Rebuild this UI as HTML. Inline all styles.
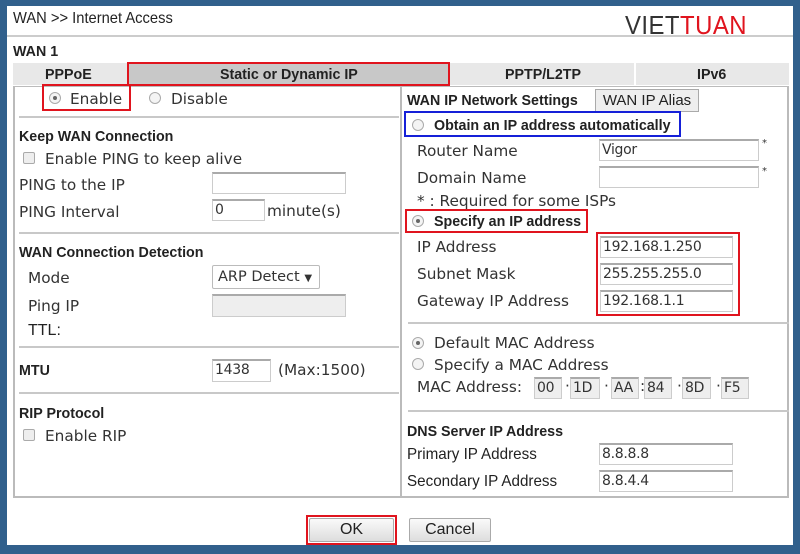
<!DOCTYPE html>
<html><head><meta charset="utf-8"><style>
*{margin:0;padding:0;box-sizing:border-box}
body{width:800px;height:554px;background:#31608c;position:relative;overflow:hidden;font-family:"DejaVu Sans",sans-serif;font-size:15.3px;color:#333}
.a{position:absolute;white-space:nowrap}
.t{margin-top:2px}
.b{font-family:"Liberation Sans",sans-serif;font-weight:bold;font-size:15px;color:#222;transform:scaleX(0.95);transform-origin:left}
.n{font-family:"Liberation Sans",sans-serif;font-size:16px;color:#222}
.inp{position:absolute;background:#fff;border:1px solid #ccc;border-top:2px solid #aaa;font-size:14px;padding-left:2px;line-height:18px;color:#333;letter-spacing:-0.3px}
.g{background:#eee}
.hl{position:absolute;height:2px;background:#c8c8c8}
.r{position:absolute;width:12px;height:12px;border-radius:50%;border:1px solid #aaa;background:#f4f4f4}
.r.on::after{content:"";position:absolute;left:3px;top:3px;width:4px;height:4px;border-radius:50%;background:#666}
.cb{position:absolute;width:12px;height:12px;border:1px solid #aaa;border-radius:2px;background:#eee}
.red{position:absolute;border:2px solid #e0141e}
</style></head><body>
<div class="a" style="left:7px;top:6px;width:786px;height:539px;background:#fff"></div>
<div class="a n" style="left:13px;top:10px;font-size:16px;transform:scaleX(0.92);transform-origin:left">WAN &gt;&gt; Internet Access</div>
<div class="a" style="left:625px;top:10px;font-family:'Liberation Sans',sans-serif;font-size:26px;letter-spacing:0.5px;transform:scaleX(0.92);transform-origin:left"><span style="color:#333">VIET</span><span style="color:#e0141e">TUAN</span></div>
<div class="hl" style="left:7px;top:35px;width:786px;background:#ccc"></div>
<div class="a b" style="left:13px;top:43px">WAN 1</div>
<!-- tabs -->
<div class="a" style="left:13px;top:63px;width:776px;height:22px;background:#e8e8e8"></div>
<div class="a" style="left:128px;top:63px;width:320px;height:22px;background:#c8c8c8"></div>
<div class="a" style="left:448px;top:63px;width:2px;height:22px;background:#fff"></div>
<div class="a" style="left:634px;top:63px;width:2px;height:22px;background:#fff"></div>
<div class="a b" style="left:45px;top:66px">PPPoE</div>
<div class="a b" style="left:220px;top:66px">Static or Dynamic IP</div>
<div class="a b" style="left:505px;top:66px">PPTP/L2TP</div>
<div class="a b" style="left:697px;top:66px">IPv6</div>
<div class="red" style="left:127px;top:62px;width:323px;height:24px"></div>
<!-- main box -->
<div class="a" style="left:13px;top:86px;width:776px;height:412px;border:2px solid #bbb;border-top:1px solid #bbb"></div>
<div class="a" style="left:400px;top:86px;width:2px;height:412px;background:#bbb"></div>
<!-- left -->
<div class="r on" style="left:49px;top:92px"></div><div class="a t" style="left:70px;top:88px">Enable</div>
<div class="red" style="left:42px;top:84px;width:89px;height:27px"></div>
<div class="r" style="left:149px;top:92px"></div><div class="a t" style="left:171px;top:88px">Disable</div>
<div class="hl" style="left:19px;top:116px;width:380px"></div>
<div class="a b" style="left:19px;top:128px">Keep WAN Connection</div>
<div class="cb" style="left:23px;top:152px"></div><div class="a t" style="left:45px;top:148px">Enable PING to keep alive</div>
<div class="a t" style="left:19px;top:174px">PING to the IP</div>
<div class="inp" style="left:212px;top:172px;width:134px;height:22px"></div>
<div class="a t" style="left:19px;top:201px">PING Interval</div>
<div class="inp" style="left:212px;top:199px;width:53px;height:22px">0</div>
<div class="a t" style="left:267px;top:200px">minute(s)</div>
<div class="hl" style="left:19px;top:232px;width:380px"></div>
<div class="a b" style="left:19px;top:244px">WAN Connection Detection</div>
<div class="a t" style="left:28px;top:267px">Mode</div>
<div class="a" style="left:212px;top:265px;width:108px;height:24px;border:1px solid #bbb;border-radius:2px;background:#fff;padding-left:5px;line-height:22px;font-size:14.5px">ARP Detect <span style="font-size:10px">▼</span></div>
<div class="a t" style="left:28px;top:295px">Ping IP</div>
<div class="inp g" style="left:212px;top:294px;width:134px;height:23px"></div>
<div class="a n t" style="left:28px;top:320px">TTL:</div>
<div class="hl" style="left:19px;top:346px;width:380px"></div>
<div class="a b" style="left:19px;top:362px">MTU</div>
<div class="inp" style="left:212px;top:359px;width:59px;height:23px">1438</div>
<div class="a t" style="left:278px;top:359px">(Max:1500)</div>
<div class="hl" style="left:19px;top:392px;width:380px"></div>
<div class="a b" style="left:19px;top:405px">RIP Protocol</div>
<div class="cb" style="left:23px;top:429px"></div><div class="a t" style="left:45px;top:425px">Enable RIP</div>
<!-- right -->
<div class="a b" style="left:407px;top:92px">WAN IP Network Settings</div>
<div class="a n" style="left:595px;top:89px;width:104px;height:23px;border:1px solid #aaa;background:#eee;text-align:center;line-height:21px;font-size:15px">WAN IP Alias</div>
<div class="red" style="left:404px;top:111px;width:277px;height:26px;border-color:#1520d8"></div>
<div class="r" style="left:412px;top:119px"></div>
<div class="a b" style="left:434px;top:117px">Obtain an IP address automatically</div>
<div class="a t" style="left:417px;top:140px">Router Name</div>
<div class="inp" style="left:599px;top:139px;width:160px;height:22px">Vigor</div><div class="a" style="left:762px;top:138px;font-size:10px">*</div>
<div class="a t" style="left:417px;top:167px">Domain Name</div>
<div class="inp" style="left:599px;top:166px;width:160px;height:22px"></div><div class="a" style="left:762px;top:166px;font-size:10px">*</div>
<div class="a t" style="left:417px;top:190px">* : Required for some ISPs</div>
<div class="red" style="left:405px;top:209px;width:183px;height:24px"></div>
<div class="r on" style="left:412px;top:215px"></div>
<div class="a b" style="left:434px;top:213px">Specify an IP address</div>
<div class="a t" style="left:417px;top:236px">IP Address</div>
<div class="inp" style="left:600px;top:236px;width:133px;height:22px">192.168.1.250</div>
<div class="a t" style="left:417px;top:263px">Subnet Mask</div>
<div class="inp" style="left:600px;top:263px;width:133px;height:22px">255.255.255.0</div>
<div class="a t" style="left:417px;top:290px">Gateway IP Address</div>
<div class="inp" style="left:600px;top:290px;width:133px;height:22px">192.168.1.1</div>
<div class="red" style="left:596px;top:232px;width:144px;height:84px"></div>
<div class="hl" style="left:408px;top:322px;width:381px"></div>
<div class="r on" style="left:412px;top:337px"></div><div class="a t" style="left:434px;top:332px">Default MAC Address</div>
<div class="r" style="left:412px;top:358px"></div><div class="a t" style="left:434px;top:354px">Specify a MAC Address</div>
<div class="a t" style="left:417px;top:376px">MAC Address:</div>
<div class="inp g" style="left:534px;top:377px;width:28px;height:22px">00</div><div class="a" style="left:565px;top:377px">·</div>
<div class="inp g" style="left:570px;top:377px;width:30px;height:22px">1D</div><div class="a" style="left:604px;top:377px">·</div>
<div class="inp g" style="left:611px;top:377px;width:28px;height:22px">AA</div><div class="a" style="left:640px;top:377px">:</div>
<div class="inp g" style="left:644px;top:377px;width:28px;height:22px">84</div><div class="a" style="left:677px;top:377px">·</div>
<div class="inp g" style="left:682px;top:377px;width:29px;height:22px">8D</div><div class="a" style="left:716px;top:377px">·</div>
<div class="inp g" style="left:721px;top:377px;width:28px;height:22px">F5</div>
<div class="hl" style="left:408px;top:410px;width:381px"></div>
<div class="a b" style="left:407px;top:423px">DNS Server IP Address</div>
<div class="a n" style="left:407px;top:446px;transform:scaleX(0.95);transform-origin:left">Primary IP Address</div>
<div class="inp" style="left:599px;top:443px;width:134px;height:22px">8.8.8.8</div>
<div class="a n" style="left:407px;top:473px;transform:scaleX(0.95);transform-origin:left">Secondary IP Address</div>
<div class="inp" style="left:599px;top:470px;width:134px;height:22px">8.8.4.4</div>
<!-- buttons -->
<div class="a n" style="left:309px;top:518px;width:85px;height:24px;border:1px solid #aaa;border-radius:2px;background:linear-gradient(#fafafa,#ddd);text-align:center;line-height:22px;font-size:16px">OK</div>
<div class="red" style="left:306px;top:515px;width:91px;height:30px"></div>
<div class="a n" style="left:409px;top:518px;width:82px;height:24px;border:1px solid #aaa;border-radius:2px;background:linear-gradient(#fafafa,#ddd);text-align:center;line-height:22px;font-size:16px">Cancel</div>
</body></html>
